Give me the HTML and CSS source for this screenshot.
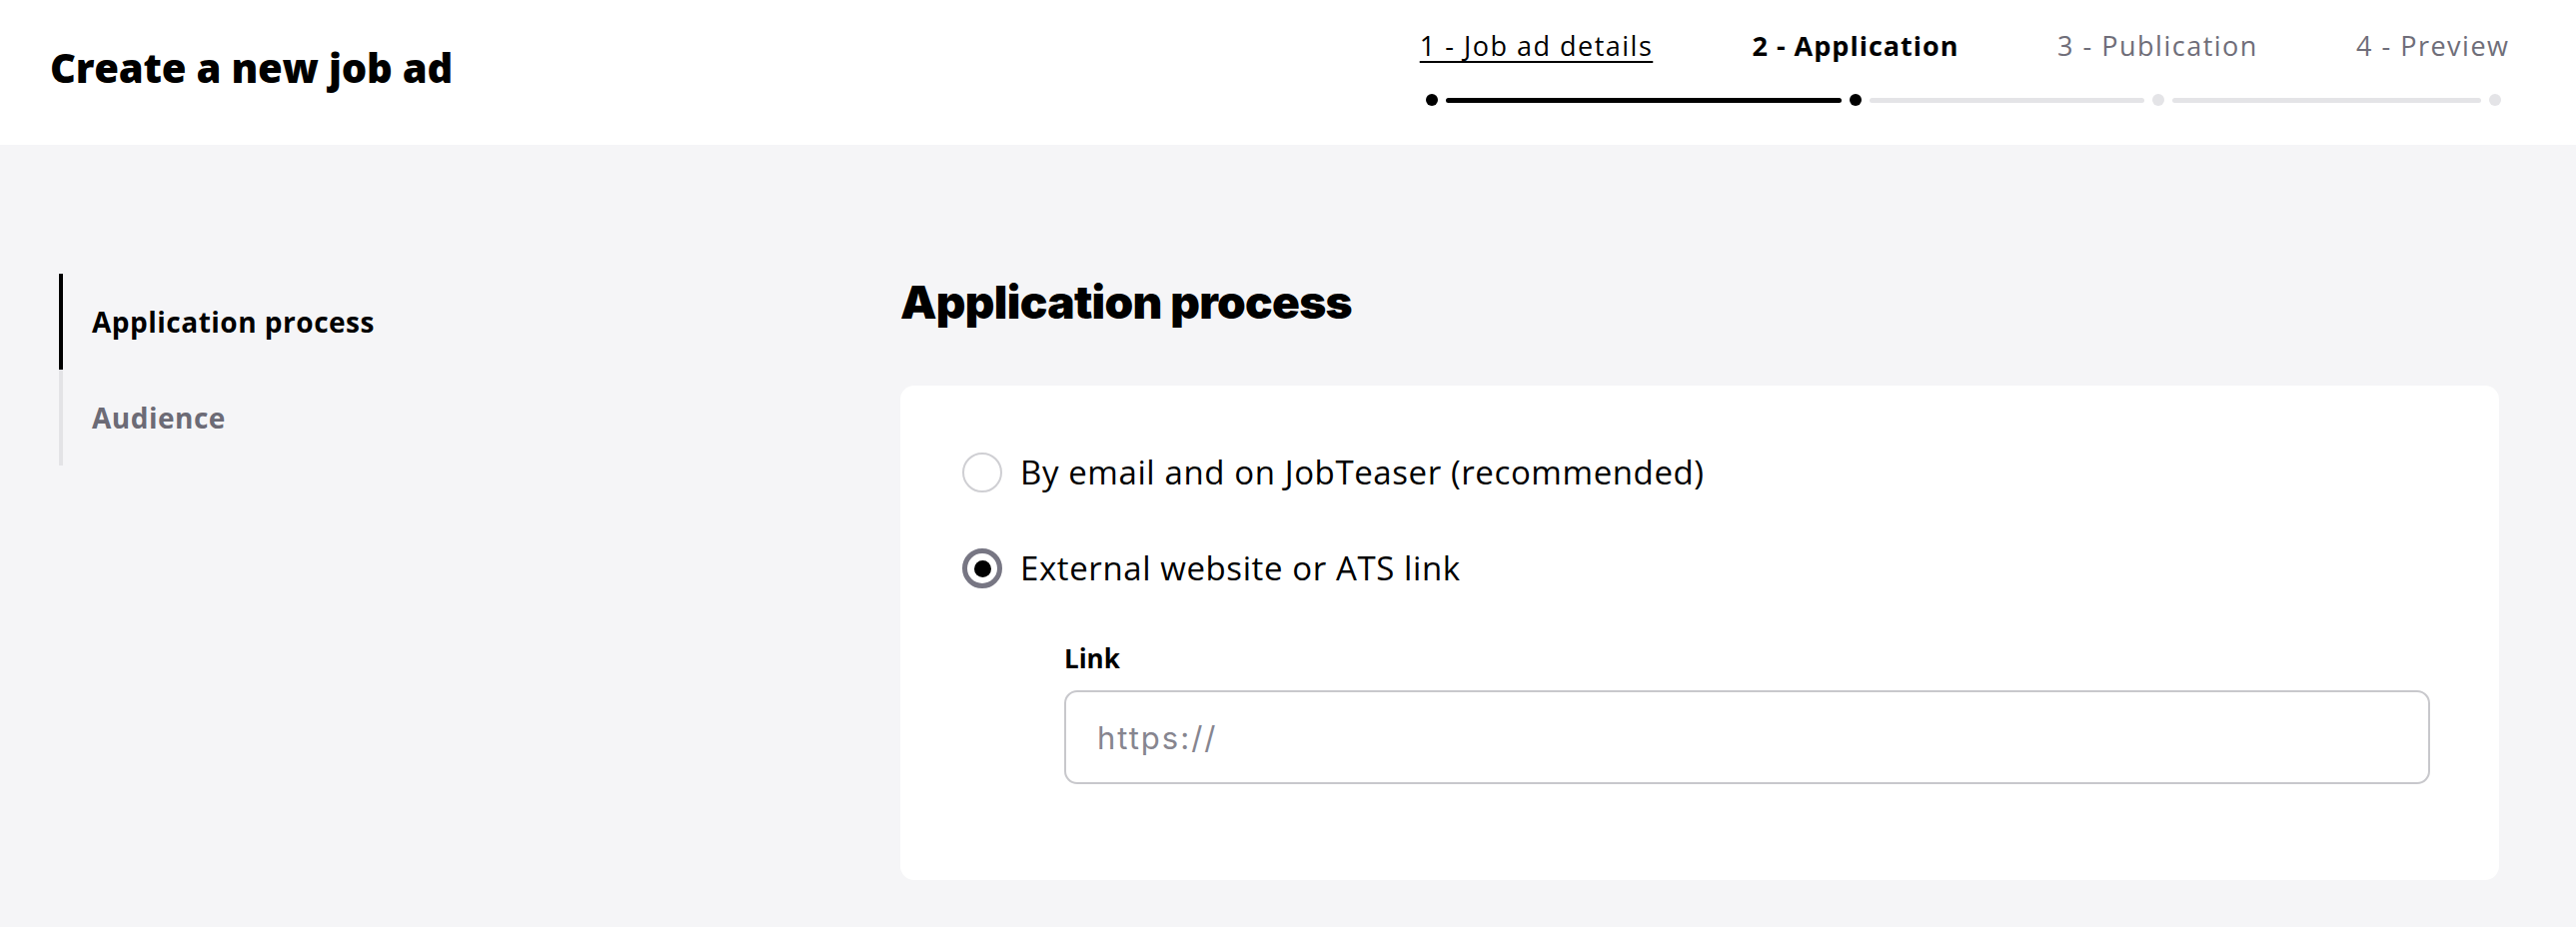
FILE: index.html
```html
<!DOCTYPE html>
<html lang="en">
<head>
<meta charset="utf-8">
<title>Create a new job ad</title>
<link rel="stylesheet" href="styles.css">
</head>
<body>
<header class="topbar">
  <h1 class="page-title">Create a new job ad</h1>
  <nav class="stepper">
    <div class="step-labels">
      <a class="step step-1 step-done" href="#">1 - Job ad details</a>
      <span class="step step-2 step-current">2 - Application</span>
      <span class="step step-3">3 - Publication</span>
      <span class="step step-4">4 - Preview</span>
    </div>
    <div class="progress">
      <span class="dot dot-on"></span>
      <span class="seg seg-a seg-on"></span>
      <span class="dot dot-on"></span>
      <span class="seg seg-b"></span>
      <span class="dot"></span>
      <span class="seg seg-c"></span>
      <span class="dot"></span>
    </div>
  </nav>
</header>
<main class="layout">
  <aside class="sidenav">
    <div class="side-item side-active">Application process</div>
    <div class="side-item">Audience</div>
  </aside>
  <section class="content">
    <h2 class="section-title">Application process</h2>
    <div class="card">
      <label class="option">
        <span class="radio"></span>
        <span class="option-text">By email and on JobTeaser (recommended)</span>
      </label>
      <label class="option">
        <span class="radio radio-checked"></span>
        <span class="option-text">External website or ATS link</span>
      </label>
      <div class="field">
        <div class="field-label">Link</div>
        <input class="field-input" type="text" placeholder="https://">
      </div>
    </div>
  </section>
</main>
</body>
</html>
```
FILE: styles.css
```css
* { box-sizing: border-box; }
html, body { margin: 0; padding: 0; }
body {
  background: #f5f5f7;
  font-family: "Open Sans", "Noto Sans", sans-serif;
  color: #000;
  min-height: 928px;
}

.topbar {
  height: 145px;
  background: #fff;
  display: flex;
  justify-content: space-between;
  padding: 0 67px 0 50px;
}
.page-title {
  align-self: center;
  margin: 0 0 10px;
  font-size: 40px;
  font-weight: 800;
  letter-spacing: -0.2px;
  line-height: 48px;
}

.stepper {
  padding-top: 26px;
  width: 1092px;
}
.step-labels {
  display: flex;
  gap: 97px;
  height: 40px;
  align-items: center;
}
.step {
  font-size: 27px;
  letter-spacing: 1.5px;
  line-height: 40px;
  color: #6f6e79;
  text-align: center;
  white-space: nowrap;
  text-decoration: none;
  flex: none;
}
.step-1 { width: 237px; color: #000; text-decoration: underline; text-underline-offset: 5px; text-decoration-thickness: 2px; }
.step-2 { width: 208px; }
.step-3 { width: 203px; }
.step-4 { width: 153px; }
.step-current { color: #000; font-weight: 700; letter-spacing: 1px; }

.progress {
  margin-top: 28px;
  display: flex;
  align-items: center;
  height: 12px;
  padding: 0 8px;
  gap: 8px;
}
.dot {
  width: 12px;
  height: 12px;
  border-radius: 50%;
  background: #e4e4e7;
  flex: none;
}
.dot-on { background: #000; }
.seg {
  height: 5px;
  border-radius: 3px;
  background: #e4e4e7;
  flex: none;
}
.seg-on { background: #000; }
.seg-a { width: 396px; }
.seg-b { width: 275px; }
.seg-c { width: 309px; }

.layout {
  display: flex;
  padding: 129px 77px 0 59px;
}
.sidenav {
  width: 842px;
  flex: none;
}
.side-item {
  height: 96px;
  display: flex;
  align-items: center;
  padding-left: 29px;
  border-left: 4px solid #e3e3e6;
  font-size: 28px;
  letter-spacing: 0.5px;
  font-weight: 700;
  color: #6c6b76;
}
.side-active {
  border-left-color: #000;
  color: #000;
}

.content {
  flex: 1;
}
.section-title {
  margin: 0 0 56px;
  font-family: Inter, "Liberation Sans", sans-serif;
  font-size: 46px;
  font-weight: 900;
  letter-spacing: -0.7px;
  line-height: 56px;
}

.card {
  background: #fff;
  border-radius: 14px;
  padding: 59px 69px 96px 62px;
}
.option {
  display: flex;
  align-items: center;
  gap: 18px;
  height: 56px;
}
.option + .option { margin-top: 40px; }
.radio {
  width: 40px;
  height: 40px;
  border-radius: 50%;
  border: 2px solid #cfcfd3;
  background: #fff;
  flex: none;
  display: flex;
  align-items: center;
  justify-content: center;
}
.radio-checked {
  border: 5px solid #777683;
}
.radio-checked::after {
  content: "";
  width: 17px;
  height: 17px;
  border-radius: 50%;
  background: #000;
}
.option-text {
  font-size: 33px;
  letter-spacing: 0.6px;
  line-height: 56px;
  white-space: nowrap;
}

.field {
  margin-top: 44px;
  padding-left: 102px;
}
.field-label {
  font-size: 26px;
  font-weight: 700;
  line-height: 36px;
}
.field-input {
  display: block;
  margin-top: 14px;
  width: 100%;
  height: 94px;
  border: 2px solid #c8c8cc;
  border-radius: 13px;
  padding: 0 31px;
  font-family: Inter, "Liberation Sans", sans-serif;
  font-size: 31px;
  letter-spacing: 2px;
  background: #fff;
  outline: none;
}
.field-input::placeholder {
  color: #86858f;
}
```
